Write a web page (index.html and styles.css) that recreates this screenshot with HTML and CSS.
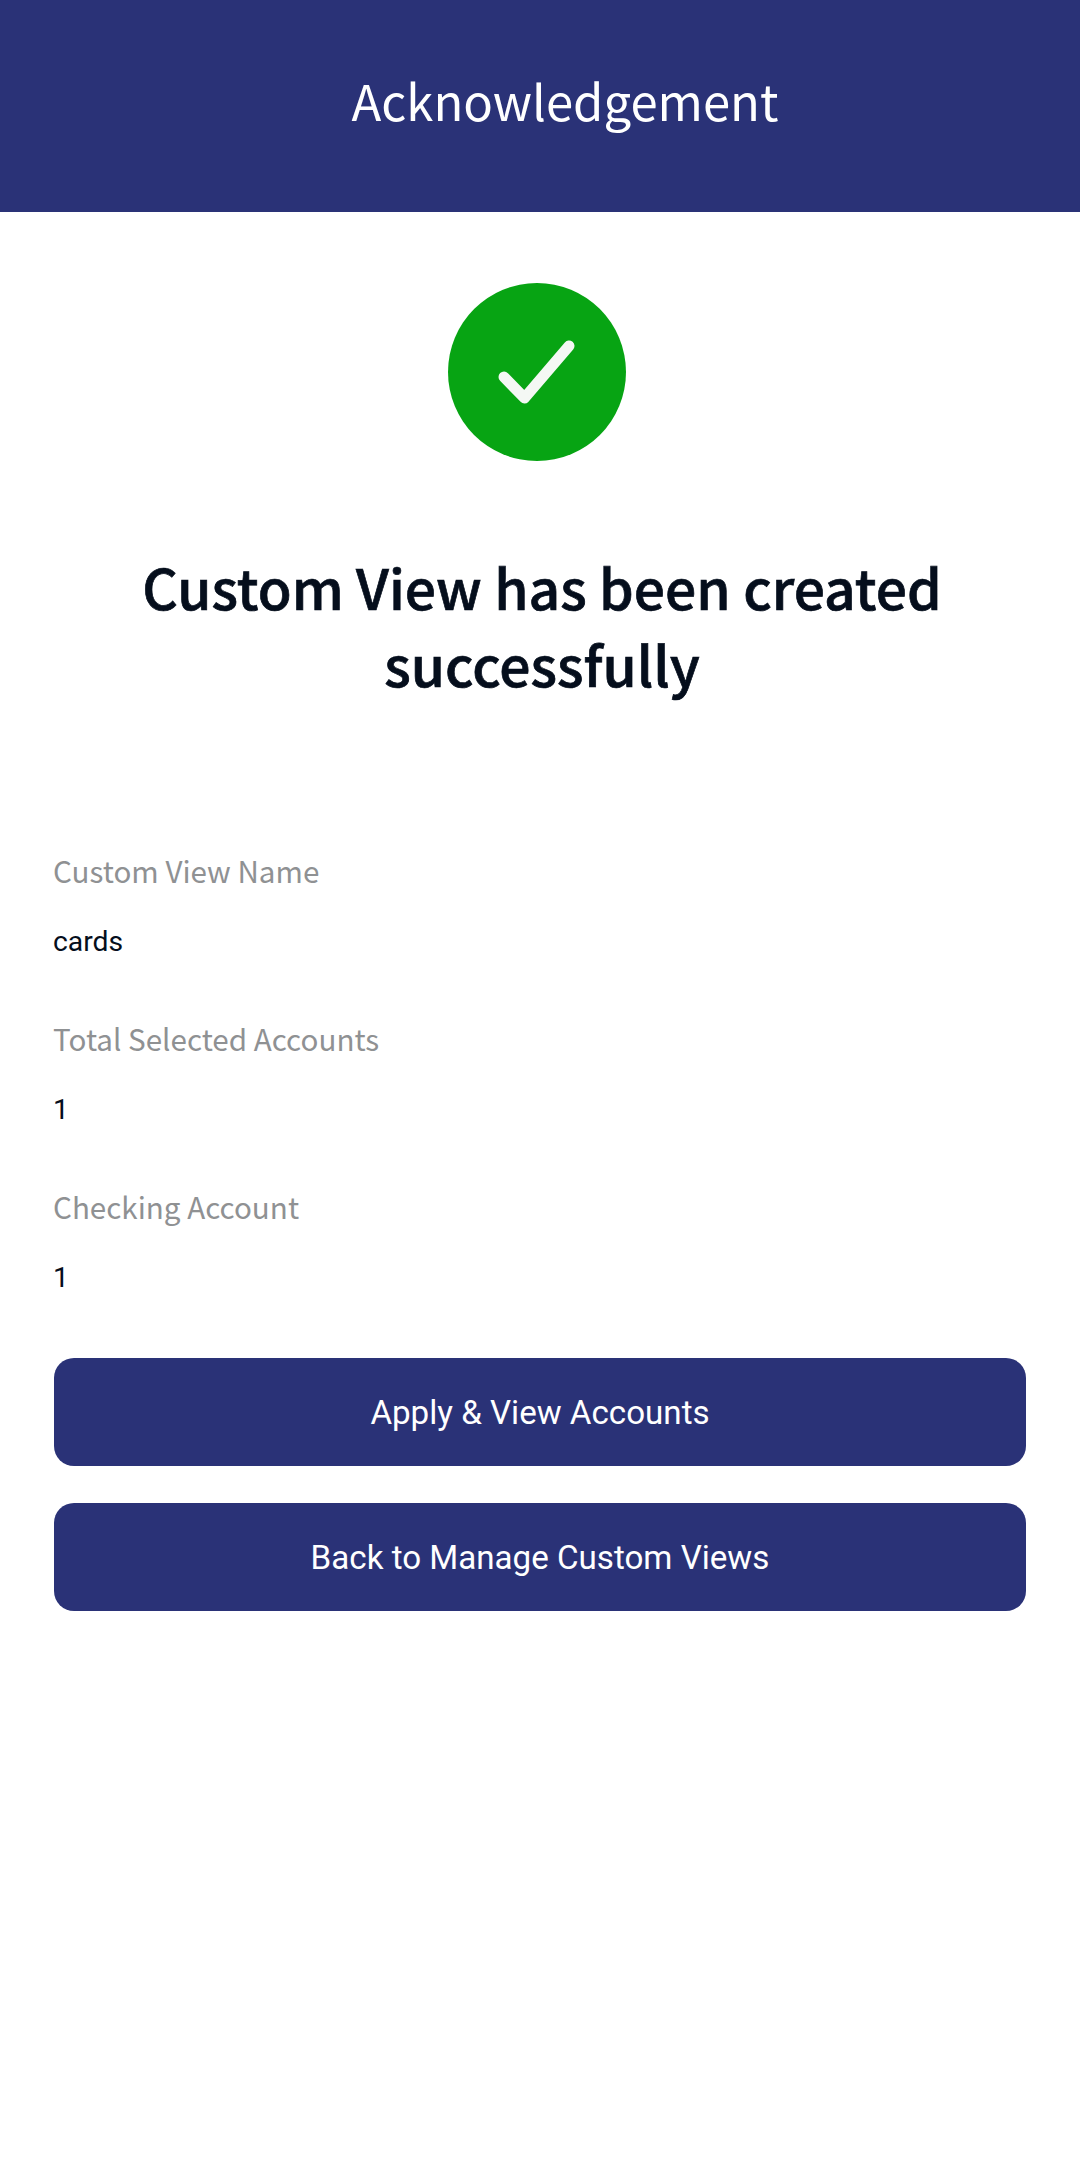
FILE: index.html
```html
<!DOCTYPE html>
<html lang="en">
<head>
    <meta charset="UTF-8">
    <meta name="viewport" content="width=device-width, initial-scale=1.0">
    <title>Acknowledgement</title>
    <link rel="stylesheet" href="styles.css">
</head>
<body>
    <div class="header">
        <div class="header-title">Acknowledgement</div>
    </div>

    <div class="status-icon">
        <svg width="178" height="178" viewBox="0 0 178 178">
            <circle cx="89" cy="89" r="89" fill="#07a413"/>
            <path d="M56 94 L76.500 115 L121 63" fill="none" stroke="#f4f8f4" stroke-width="11" stroke-linecap="round" stroke-linejoin="round"/>
        </svg>
    </div>

    <h1 class="status-text">Custom View has been created successfully</h1>

    <div class="details">
        <div class="detail">
            <div class="detail-label">Custom View Name</div>
            <div class="detail-value">cards</div>
        </div>
        <div class="detail">
            <div class="detail-label">Total Selected Accounts</div>
            <div class="detail-value">1</div>
        </div>
        <div class="detail">
            <div class="detail-label">Checking Account</div>
            <div class="detail-value">1</div>
        </div>
    </div>

    <div class="actions">
        <button class="btn">Apply &amp; View Accounts</button>
        <button class="btn">Back to Manage Custom Views</button>
    </div>
</body>
</html>
```

FILE: styles.css
```css
body, html {
    margin: 0;
    padding: 0;
    background: #fff;
}
.header {
    height: 212px;
    background: #2a3277;
    display: flex;
    align-items: center;
    justify-content: center;
    padding-left: 50px;
}
.header-title {
    color: #fff;
    font-family: "Noto Sans CJK SC", "Noto Sans", sans-serif;
    font-size: 49px;
    line-height: 64px;
    margin-top: -12px;
}
.status-icon {
    display: flex;
    justify-content: center;
    padding-right: 6px;
    margin-top: 71px;
}
.status-icon svg {
    display: block;
}
.status-text {
    margin: 87px 52px 0 56px;
    color: #050e1c;
    font-family: "Noto Sans CJK SC", "Noto Sans", sans-serif;
    font-size: 55.200px;
    font-weight: 500;
    -webkit-text-stroke: 0.7px #050e1c;
    line-height: 77px;
    text-align: center;
}
.details {
    margin-top: 145px;
    padding: 0 53px;
}
.detail {
    margin-bottom: 56px;
}
.detail-label {
    color: #8f9193;
    font-family: "Noto Sans CJK SC", "Noto Sans", sans-serif;
    font-size: 29.600px;
    line-height: 48px;
}
.detail-value {
    margin-top: 30px;
    color: #050e1c;
    font-family: Roboto, sans-serif;
    font-size: 28.300px;
    line-height: 34px;
}
.actions {
    display: flex;
    flex-direction: column;
    gap: 37px;
    margin-top: 63px;
    padding: 0 54px;
}
.btn {
    height: 108px;
    border: none;
    border-radius: 20px;
    background: #2a3277;
    color: #fff;
    font-family: Roboto, sans-serif;
    font-size: 33.150px;
}
```
